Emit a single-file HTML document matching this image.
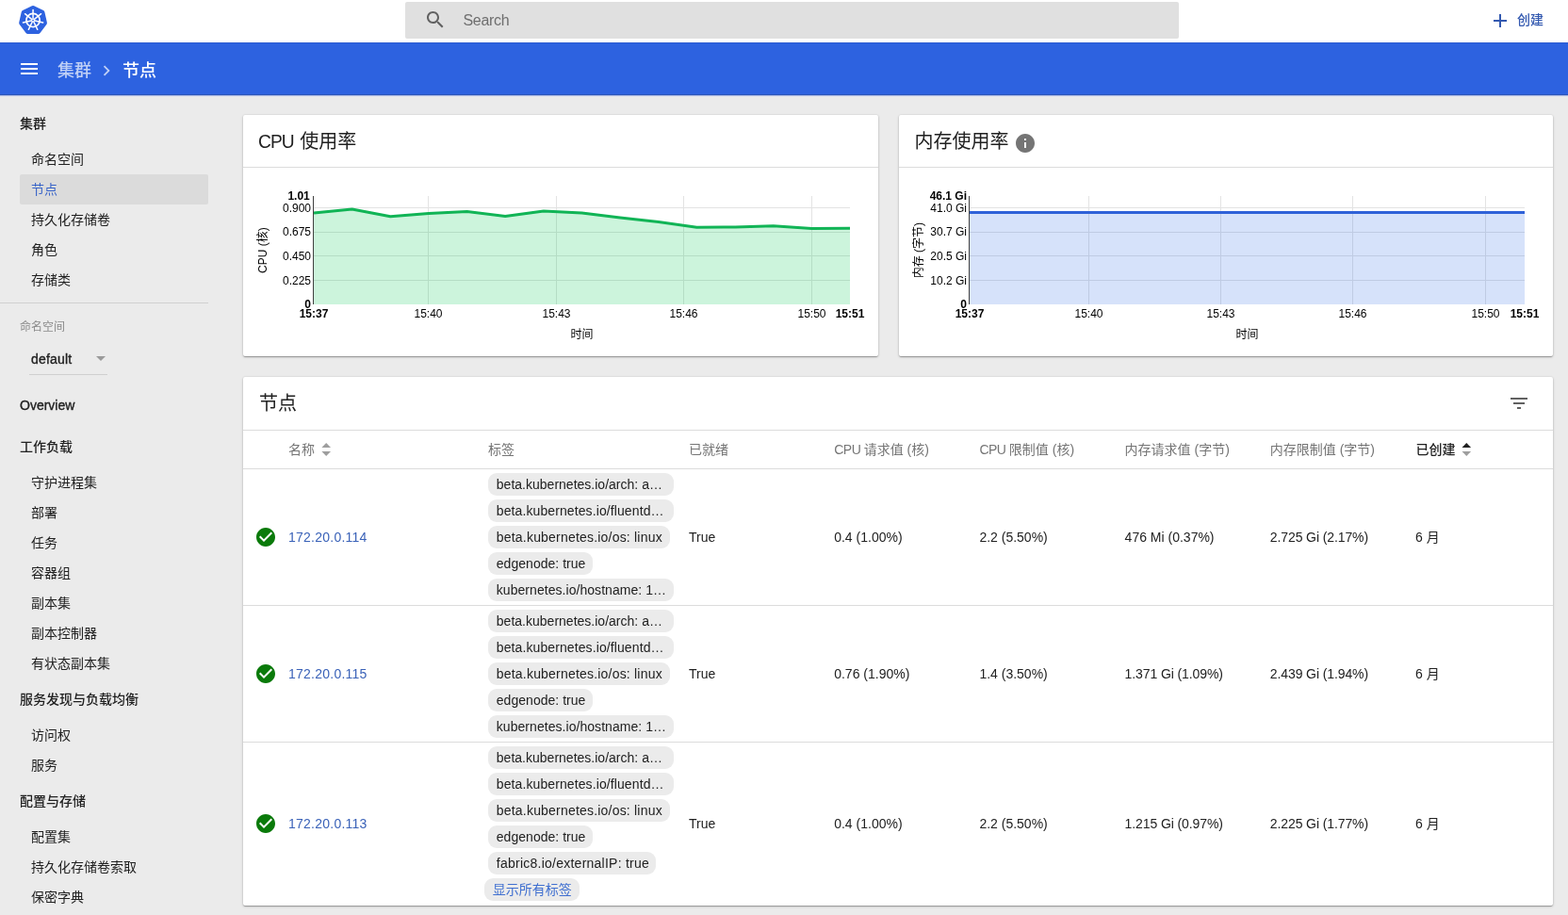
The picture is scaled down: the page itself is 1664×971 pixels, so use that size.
<!DOCTYPE html>
<html lang="zh-CN">
<head>
<meta charset="utf-8">
<title>节点 - Kubernetes Dashboard</title>
<style>
*{box-sizing:border-box;margin:0;padding:0}
html,body{width:1664px;height:971px;overflow:hidden}
body{background:#ebebeb;font-family:"Liberation Sans","Noto Sans CJK SC",sans-serif;font-size:14px;color:#212121;position:relative}
#root{position:absolute;left:0;top:0;width:1664px;height:971px;will-change:transform}
.abs{position:absolute}
.topbar{position:absolute;left:0;top:0;width:1664px;height:45px;background:#fff}
.search{position:absolute;left:430px;top:2px;width:821px;height:39px;background:#e0e0e0;border-radius:2px}
.search span{position:absolute;left:61.5px;top:0;line-height:39px;font-size:16px;color:#6e6e6e;letter-spacing:-.3px}
.create{position:absolute;left:1610px;top:0;line-height:42px;font-size:14px;font-weight:500;color:#3359b0}
.bluebar{position:absolute;left:0;top:45px;width:1664px;height:56px;background:#2d62e0}
.bluebar:before{content:"";position:absolute;left:0;top:0;width:100%;height:1px;background:#2c5bd0}
.bluebar:after{content:"";position:absolute;left:0;top:54px;width:100%;height:4px;background:linear-gradient(#2d62e0 0,#2d62e0 12%,#2c55b8 37%,#2c55b8 45%,#aab9e4 62%,#e3e5ec 87%,#ebebeb 100%)}
.crumb{position:absolute;top:2px;line-height:57px;font-size:18px;font-weight:500;color:#fff;white-space:nowrap}
.nav{position:absolute;left:0;width:241px;white-space:nowrap;line-height:32px;height:32px;font-size:14px;color:#212121}
.nav.h{font-weight:500;padding-left:21px}
.lat{font-weight:400;-webkit-text-stroke:.35px currentColor}
.nav.i{padding-left:33px}
.nav.sel{left:21px;width:200px;padding-left:12px;background:#dbdbdb;color:#3a65c8;border-radius:2px}
.card{position:absolute;background:#fff;border-radius:2px;box-shadow:0 1px 3px 0 rgba(0,0,0,.2),0 1px 1px 0 rgba(0,0,0,.14),0 2px 1px -1px rgba(0,0,0,.12),0 0 2px 0 rgba(0,0,0,.12)}
.ctitle{position:absolute;left:16.5px;top:0;line-height:56px;font-size:20px;color:#212121;white-space:nowrap}
.hline{position:absolute;left:0;right:0;height:1px;background:#dcdcdc}
.th{position:absolute;top:457px;line-height:40px;font-size:14px;color:#757575;white-space:nowrap}
.td{position:absolute;line-height:20px;font-size:14px;color:#212121;white-space:nowrap}
.link{color:#3a62b8}
.chip{position:absolute;left:518px;height:24px;line-height:24px;border-radius:9px;background:#ebebeb;padding:0 0 0 8.8px;font-size:14px;color:#212121;white-space:nowrap;overflow:hidden}
svg{position:absolute;overflow:visible}
svg text{font-family:"Liberation Sans","Noto Sans CJK SC",sans-serif}
</style>
</head>
<body>
<div id="root">
<div class="topbar">
<svg style="left:20px;top:6px" width="30" height="30" viewBox="0 0 30 30"><g transform="translate(15.05 15.55) scale(1 1.028)"><polygon points="0.00,-12.60 9.85,-7.86 12.28,2.80 5.47,11.35 -5.47,11.35 -12.28,2.80 -9.85,-7.86" fill="#2d62e0" stroke="#2d62e0" stroke-width="5.2" stroke-linejoin="round"/></g><g stroke="#fff" fill="none" transform="translate(15.05 15.5)"><circle r="7.1" stroke-width="1.7"/><line x1="0.00" y1="-2.20" x2="0.00" y2="-10.90" stroke-width="1.5" stroke-linecap="round"/><line x1="1.72" y1="-1.37" x2="8.52" y2="-6.80" stroke-width="1.5" stroke-linecap="round"/><line x1="2.14" y1="0.49" x2="10.63" y2="2.43" stroke-width="1.5" stroke-linecap="round"/><line x1="0.95" y1="1.98" x2="4.73" y2="9.82" stroke-width="1.5" stroke-linecap="round"/><line x1="-0.95" y1="1.98" x2="-4.73" y2="9.82" stroke-width="1.5" stroke-linecap="round"/><line x1="-2.14" y1="0.49" x2="-10.63" y2="2.43" stroke-width="1.5" stroke-linecap="round"/><line x1="-1.72" y1="-1.37" x2="-8.52" y2="-6.80" stroke-width="1.5" stroke-linecap="round"/><circle r="2.1" fill="#fff" stroke="none"/><circle r="0.85" fill="#2d62e0" stroke="none"/></g></svg>
<div class="search"><svg style="left:20px;top:7px" width="24" height="24" viewBox="0 0 24 24"><path fill="#616161" d="M15.5 14h-.79l-.28-.27C15.41 12.59 16 11.11 16 9.5 16 5.91 13.09 3 9.5 3S3 5.91 3 9.5 5.91 16 9.5 16c1.61 0 3.09-.59 4.23-1.57l.27.28v.79l5 4.99L20.49 19l-4.99-5zm-6 0C7.01 14 5 11.99 5 9.5S7.01 5 9.5 5 14 7.01 14 9.5 11.99 14 9.5 14z"/></svg><span>Search</span></div>
<svg style="left:1580px;top:10px" width="24" height="24" viewBox="0 0 24 24"><path fill="#3359b0" d="M19 13h-6v6h-2v-6H5v-2h6V5h2v6h6v2z"/></svg>
<div class="create">创建</div>
</div>
<div class="bluebar">
<svg style="left:19px;top:16px" width="24" height="24" viewBox="0 0 24 24"><path fill="#fff" d="M3 18h18v-2H3v2zm0-5h18v-2H3v2zm0-7v2h18V6H3z"/></svg>
<div class="crumb" style="left:61px;color:rgba(255,255,255,.7)">集群</div>
<svg style="left:102.4px;top:18.6px" width="22" height="22" viewBox="0 0 24 24"><path fill="rgba(255,255,255,.7)" d="M10 6L8.59 7.41 13.17 12l-4.58 4.59L10 18l6-6z"/></svg>
<div class="crumb" style="left:130px">节点</div>
</div>
<div class="nav h" style="top:115px">集群</div>
<div class="nav i" style="top:153px">命名空间</div>
<div class="nav sel" style="top:185px">节点</div>
<div class="nav i" style="top:217px">持久化存储卷</div>
<div class="nav i" style="top:249px">角色</div>
<div class="nav i" style="top:281px">存储类</div>
<div class="abs" style="left:0;top:321px;width:221px;height:1px;background:#d0d0d0"></div>
<div class="abs" style="left:21px;top:337px;line-height:20px;font-size:12px;color:#8a8a8a">命名空间</div>
<div class="abs lat" style="left:33px;top:371px;line-height:20px;font-size:14px;letter-spacing:.2px;color:#212121">default</div>
<svg style="left:95px;top:368px" width="24" height="24" viewBox="0 0 24 24"><path fill="#9a9a9a" d="M7 10l5 5 5-5z"/></svg>
<div class="abs" style="left:31px;top:397px;width:83px;height:1px;background:#cfcfcf"></div>
<div class="nav h lat" style="top:414px">Overview</div>
<div class="nav h" style="top:458px">工作负载</div>
<div class="nav i" style="top:496px">守护进程集</div>
<div class="nav i" style="top:528px">部署</div>
<div class="nav i" style="top:560px">任务</div>
<div class="nav i" style="top:592px">容器组</div>
<div class="nav i" style="top:624px">副本集</div>
<div class="nav i" style="top:656px">副本控制器</div>
<div class="nav i" style="top:688px">有状态副本集</div>
<div class="nav h" style="top:726px">服务发现与负载均衡</div>
<div class="nav i" style="top:764px">访问权</div>
<div class="nav i" style="top:796px">服务</div>
<div class="nav h" style="top:834px">配置与存储</div>
<div class="nav i" style="top:872px">配置集</div>
<div class="nav i" style="top:904px">持久化存储卷索取</div>
<div class="nav i" style="top:936px">保密字典</div>
<div class="card" style="left:258px;top:122px;width:674px;height:256px">
<div class="ctitle"><span style="display:inline-block;letter-spacing:-1px;margin:0 .7px 0 -.7px;transform:scaleX(.96);transform-origin:0 50%">CPU&nbsp;</span>使用率</div>
<div class="hline" style="top:55px"></div>
<svg style="left:0;top:0" width="674" height="256" viewBox="0 0 674 256" font-size="12" fill="#000"><line x1="75" y1="98.5" x2="644" y2="98.5" stroke="#e3e3e3"/><line x1="75" y1="124.5" x2="644" y2="124.5" stroke="#e3e3e3"/><line x1="75" y1="149.5" x2="644" y2="149.5" stroke="#e3e3e3"/><line x1="75" y1="175.5" x2="644" y2="175.5" stroke="#e3e3e3"/><line x1="196.5" y1="86" x2="196.5" y2="201" stroke="#e3e3e3"/><line x1="332.5" y1="86" x2="332.5" y2="201" stroke="#e3e3e3"/><line x1="467.5" y1="86" x2="467.5" y2="201" stroke="#e3e3e3"/><line x1="603.5" y1="86" x2="603.5" y2="201" stroke="#e3e3e3"/><polygon points="75,201 75.0,103.9 115.6,100.0 156.3,107.8 196.9,104.4 237.6,102.6 278.2,107.5 318.9,102.0 359.5,104.0 400.1,108.9 440.8,113.6 481.4,119.2 522.1,119.0 562.7,117.8 603.4,120.6 644.0,120.3 644,201" fill="rgba(0,199,82,.2)"/><polyline points="75.0,103.9 115.6,100.0 156.3,107.8 196.9,104.4 237.6,102.6 278.2,107.5 318.9,102.0 359.5,104.0 400.1,108.9 440.8,113.6 481.4,119.2 522.1,119.0 562.7,117.8 603.4,120.6 644.0,120.3" fill="none" stroke="#11b456" stroke-width="3" stroke-linejoin="round"/><line x1="74.5" y1="86" x2="74.5" y2="201" stroke="#000" stroke-opacity=".75"/><text x="70.8" y="90.3" text-anchor="end" font-weight="bold">1.01</text><text x="72" y="102.55" text-anchor="end">0.900</text><text x="72" y="128.20" text-anchor="end">0.675</text><text x="72" y="153.85" text-anchor="end">0.450</text><text x="72" y="179.50" text-anchor="end">0.225</text><text x="72" y="204.9" text-anchor="end" font-weight="bold">0</text><text x="75" y="215" text-anchor="middle" font-weight="bold">15:37</text><text x="644" y="215" text-anchor="middle" font-weight="bold">15:51</text><text x="196.5" y="215" text-anchor="middle">15:40</text><text x="332.5" y="215" text-anchor="middle">15:43</text><text x="467.5" y="215" text-anchor="middle">15:46</text><text x="603.5" y="215" text-anchor="middle">15:50</text><text x="359.5" y="237" text-anchor="middle">时间</text><text transform="translate(24.8 143.7) rotate(-90)" text-anchor="middle">CPU (核)</text></svg>
</div>
<div class="card" style="left:954px;top:122px;width:694px;height:256px">
<div class="ctitle">内存使用率</div>
<svg style="left:121.5px;top:17.8px" width="24" height="24" viewBox="0 0 24 24"><path fill="#757575" d="M12 2C6.48 2 2 6.48 2 12s4.48 10 10 10 10-4.48 10-10S17.52 2 12 2zm1 15h-2v-6h2v6zm0-8h-2V7h2v2z"/></svg>
<div class="hline" style="top:55px"></div>
<svg style="left:0;top:0" width="694" height="256" viewBox="0 0 694 256" font-size="12" fill="#000"><line x1="75" y1="98.5" x2="664" y2="98.5" stroke="#e3e3e3"/><line x1="75" y1="124.5" x2="664" y2="124.5" stroke="#e3e3e3"/><line x1="75" y1="149.5" x2="664" y2="149.5" stroke="#e3e3e3"/><line x1="75" y1="175.5" x2="664" y2="175.5" stroke="#e3e3e3"/><line x1="201.5" y1="86" x2="201.5" y2="201" stroke="#e3e3e3"/><line x1="341.5" y1="86" x2="341.5" y2="201" stroke="#e3e3e3"/><line x1="481.5" y1="86" x2="481.5" y2="201" stroke="#e3e3e3"/><line x1="622.5" y1="86" x2="622.5" y2="201" stroke="#e3e3e3"/><polygon points="75,201 75.0,103.4 117.1,103.4 159.1,103.4 201.2,103.4 243.3,103.4 285.4,103.4 327.4,103.4 369.5,103.4 411.6,103.4 453.6,103.4 495.7,103.4 537.8,103.4 579.9,103.4 621.9,103.4 664.0,103.4 664,201" fill="rgba(50,109,230,.2)"/><polyline points="75.0,103.4 117.1,103.4 159.1,103.4 201.2,103.4 243.3,103.4 285.4,103.4 327.4,103.4 369.5,103.4 411.6,103.4 453.6,103.4 495.7,103.4 537.8,103.4 579.9,103.4 621.9,103.4 664.0,103.4" fill="none" stroke="#2f62d8" stroke-width="3" stroke-linejoin="round"/><line x1="74.5" y1="86" x2="74.5" y2="201" stroke="#000" stroke-opacity=".75"/><text x="72" y="90.3" text-anchor="end" font-weight="bold">46.1 Gi</text><text x="72" y="102.55" text-anchor="end">41.0 Gi</text><text x="72" y="128.20" text-anchor="end">30.7 Gi</text><text x="72" y="153.85" text-anchor="end">20.5 Gi</text><text x="72" y="179.50" text-anchor="end">10.2 Gi</text><text x="72" y="204.9" text-anchor="end" font-weight="bold">0</text><text x="75" y="215" text-anchor="middle" font-weight="bold">15:37</text><text x="664" y="215" text-anchor="middle" font-weight="bold">15:51</text><text x="201.5" y="215" text-anchor="middle">15:40</text><text x="341.5" y="215" text-anchor="middle">15:43</text><text x="481.5" y="215" text-anchor="middle">15:46</text><text x="622.5" y="215" text-anchor="middle">15:50</text><text x="369.5" y="237" text-anchor="middle">时间</text><text transform="translate(24.8 143.7) rotate(-90)" text-anchor="middle">内存 (字节)</text></svg>
</div>
<div class="card" style="left:258px;top:400px;width:1390px;height:561px"></div>
<div class="abs" style="left:275px;top:400px;line-height:56px;font-size:20px;color:#212121">节点</div>
<svg style="left:1600px;top:416px" width="24" height="24" viewBox="0 0 24 24"><path fill="#616161" d="M10 18h4v-2h-4v2zM3 6v2h18V6H3zm3 7h12v-2H6v2z"/></svg>
<div class="abs" style="left:258px;top:456px;width:1390px;height:1px;background:#dcdcdc"></div>
<div class="abs" style="left:258px;top:497px;width:1390px;height:1px;background:#dcdcdc"></div>
<div class="abs" style="left:258px;top:642px;width:1390px;height:1px;background:#dcdcdc"></div>
<div class="abs" style="left:258px;top:787px;width:1390px;height:1px;background:#dcdcdc"></div>
<div class="th" style="left:306px">名称</div>
<div class="th" style="left:518px">标签</div>
<div class="th" style="left:731px">已就绪</div>
<div class="th" style="left:885.2px"><span style="letter-spacing:-.5px">CPU </span>请求值 (核)</div>
<div class="th" style="left:1039.4px"><span style="letter-spacing:-.5px">CPU </span>限制值 (核)</div>
<div class="th" style="left:1193.6px">内存请求值 (字节)</div>
<div class="th" style="left:1347.8px">内存限制值 (字节)</div>
<div class="th" style="left:1502.5px;color:#212121;font-weight:500">已创建</div>
<svg style="left:0;top:0" width="1" height="1"><path d="M341.4 475L346.2 470.1 351 475z" fill="#9e9e9e"/><path d="M341.4 479.1L346.2 483.9 351 479.1z" fill="#9e9e9e"/></svg>
<svg style="left:0;top:0" width="1" height="1"><path d="M1551.5 475L1556.3 470.1 1561.1 475z" fill="#212121"/><path d="M1551.5 479.1L1556.3 483.9 1561.1 479.1z" fill="#9e9e9e"/></svg>
<svg style="left:270px;top:558px" width="24" height="24" viewBox="0 0 24 24"><circle cx="12" cy="12" r="8" fill="#fff"/><path fill="#0a7a0a" d="M12 2C6.48 2 2 6.48 2 12s4.48 10 10 10 10-4.48 10-10S17.52 2 12 2zm-2 15l-5-5 1.41-1.41L10 14.17l7.59-7.59L19 8l-9 9z"/></svg>
<div class="td link" style="left:306px;top:560px;letter-spacing:.24px">172.20.0.114</div>
<div class="chip" style="top:502px;width:197px;letter-spacing:0.01px">beta.kubernetes.io/arch: a…</div>
<div class="chip" style="top:530px;width:197px;letter-spacing:0.1px">beta.kubernetes.io/fluentd…</div>
<div class="chip" style="top:558px;width:193px;letter-spacing:0.2px">beta.kubernetes.io/os: linux</div>
<div class="chip" style="top:586px;width:111px;letter-spacing:0.03px">edgenode: true</div>
<div class="chip" style="top:614px;width:197px;letter-spacing:0.05px">kubernetes.io/hostname: 1…</div>
<div class="td" style="left:731px;top:560px">True</div>
<div class="td" style="left:885.2px;top:560px">0.4 (1.00%)</div>
<div class="td" style="left:1039.4px;top:560px">2.2 (5.50%)</div>
<div class="td" style="left:1193.6px;top:560px">476 Mi (0.37%)</div>
<div class="td" style="left:1347.8px;top:560px;letter-spacing:-.1px">2.725 Gi (2.17%)</div>
<div class="td" style="left:1502px;top:560px">6 月</div>
<svg style="left:270px;top:703px" width="24" height="24" viewBox="0 0 24 24"><circle cx="12" cy="12" r="8" fill="#fff"/><path fill="#0a7a0a" d="M12 2C6.48 2 2 6.48 2 12s4.48 10 10 10 10-4.48 10-10S17.52 2 12 2zm-2 15l-5-5 1.41-1.41L10 14.17l7.59-7.59L19 8l-9 9z"/></svg>
<div class="td link" style="left:306px;top:705px;letter-spacing:.24px">172.20.0.115</div>
<div class="chip" style="top:647px;width:197px;letter-spacing:0.01px">beta.kubernetes.io/arch: a…</div>
<div class="chip" style="top:675px;width:197px;letter-spacing:0.1px">beta.kubernetes.io/fluentd…</div>
<div class="chip" style="top:703px;width:193px;letter-spacing:0.2px">beta.kubernetes.io/os: linux</div>
<div class="chip" style="top:731px;width:111px;letter-spacing:0.03px">edgenode: true</div>
<div class="chip" style="top:759px;width:197px;letter-spacing:0.05px">kubernetes.io/hostname: 1…</div>
<div class="td" style="left:731px;top:705px">True</div>
<div class="td" style="left:885.2px;top:705px">0.76 (1.90%)</div>
<div class="td" style="left:1039.4px;top:705px">1.4 (3.50%)</div>
<div class="td" style="left:1193.6px;top:705px;letter-spacing:-.1px">1.371 Gi (1.09%)</div>
<div class="td" style="left:1347.8px;top:705px;letter-spacing:-.1px">2.439 Gi (1.94%)</div>
<div class="td" style="left:1502px;top:705px">6 月</div>
<svg style="left:270px;top:862px" width="24" height="24" viewBox="0 0 24 24"><circle cx="12" cy="12" r="8" fill="#fff"/><path fill="#0a7a0a" d="M12 2C6.48 2 2 6.48 2 12s4.48 10 10 10 10-4.48 10-10S17.52 2 12 2zm-2 15l-5-5 1.41-1.41L10 14.17l7.59-7.59L19 8l-9 9z"/></svg>
<div class="td link" style="left:306px;top:864px;letter-spacing:.24px">172.20.0.113</div>
<div class="chip" style="top:792px;width:197px;letter-spacing:0.01px">beta.kubernetes.io/arch: a…</div>
<div class="chip" style="top:820px;width:197px;letter-spacing:0.1px">beta.kubernetes.io/fluentd…</div>
<div class="chip" style="top:848px;width:193px;letter-spacing:0.2px">beta.kubernetes.io/os: linux</div>
<div class="chip" style="top:876px;width:111px;letter-spacing:0.03px">edgenode: true</div>
<div class="chip" style="top:904px;width:178px;letter-spacing:0.245px">fabric8.io/externalIP: true</div>
<div class="chip" style="left:514px;top:932px;width:101px;color:#3f6fd0">显示所有标签</div>
<div class="td" style="left:731px;top:864px">True</div>
<div class="td" style="left:885.2px;top:864px">0.4 (1.00%)</div>
<div class="td" style="left:1039.4px;top:864px">2.2 (5.50%)</div>
<div class="td" style="left:1193.6px;top:864px;letter-spacing:-.1px">1.215 Gi (0.97%)</div>
<div class="td" style="left:1347.8px;top:864px;letter-spacing:-.1px">2.225 Gi (1.77%)</div>
<div class="td" style="left:1502px;top:864px">6 月</div>
</div>
</body>
</html>
